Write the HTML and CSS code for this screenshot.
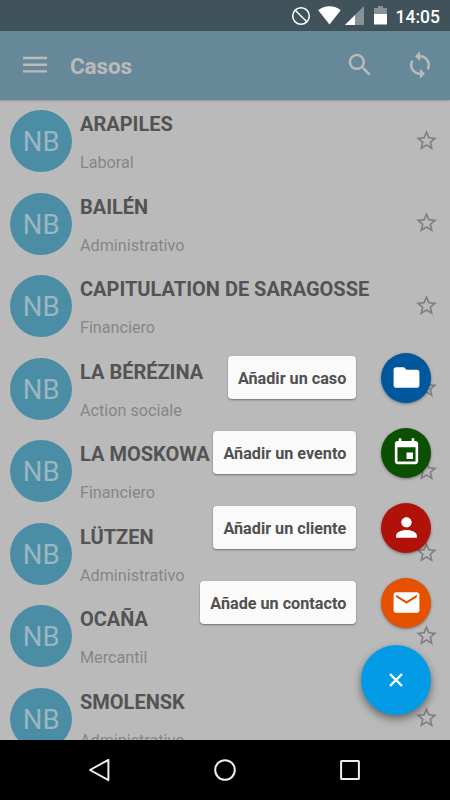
FILE: index.html
```html
<!DOCTYPE html>
<html lang="es">
<head>
    <meta charset="UTF-8">
    <meta name="viewport" content="width=device-width, initial-scale=1.0">
    <title>Casos</title>
    <link rel="stylesheet" href="styles.css">
</head>
<body>
    <svg class="sprite">
        <symbol id="star" viewBox="0 0 24 24">
            <path d="M22 9.24l-7.19-.62L12 2 9.19 8.63 2 9.24l5.46 4.73L5.82 21 12 17.27 18.18 21l-1.63-7.03L22 9.24zM12 15.4l-3.76 2.27 1-4.28-3.32-2.88 4.38-.38L12 6.1l1.71 4.04 4.38.38-3.32 2.88 1 4.28L12 15.4z"/>
        </symbol>
    </svg>

    <div class="screen">
        <div class="status-bar">
            <svg class="status-none" viewBox="0 0 20 20"><circle cx="10" cy="10" r="8.3"/><path d="M4.2 4.2l11.6 11.6"/></svg>
            <svg class="status-wifi" viewBox="0 0 23 19"><path d="M11.5 18.6L.3 4.2C3.5 1.7 7.2.3 11.5.3s8 1.4 11.2 3.9z"/></svg>
            <svg class="status-signal" viewBox="0 0 19 19"><path class="dim" d="M19 0v19H0z"/><path d="M10 9v10H0z"/></svg>
            <svg class="status-battery" viewBox="0 0 13 19"><path class="dim" d="M4 0h5v2h4v7H0V2h4z"/><path d="M0 8h13v10.5H0z"/></svg>
            <span class="clock">14:05</span>
        </div>

        <header class="toolbar">
            <svg class="icon menu" viewBox="0 0 24 18"><path d="M0 .8h24v2.4H0zM0 7.5h24v2.4H0zM0 14.2h24v2.4H0z"/></svg>
            <h1>Casos</h1>
            <svg class="icon search" viewBox="0 0 24 24"><path d="M15.5 14h-.79l-.28-.27C15.41 12.59 16 11.11 16 9.5 16 5.91 13.09 3 9.5 3S3 5.91 3 9.5 5.91 16 9.5 16c1.61 0 3.09-.59 4.23-1.57l.27.28v.79l5 4.99L20.49 19l-4.99-5zm-6 0C7.01 14 5 11.99 5 9.5S7.01 5 9.5 5 14 7.01 14 9.5 11.99 14 9.5 14z"/></svg>
            <svg class="icon" viewBox="0 0 24 24"><path d="M12 4V1L8 5l4 4V6c3.31 0 6 2.69 6 6 0 1.01-.25 1.97-.7 2.8l1.46 1.46C19.54 15.03 20 13.57 20 12c0-4.42-3.58-8-8-8zm0 14c-3.31 0-6-2.69-6-6 0-1.01.25-1.97.7-2.8L5.24 7.74C4.46 8.97 4 10.43 4 12c0 4.42 3.58 8 8 8v3l4-4-4-4v3z"/></svg>
        </header>

        <ul class="cases">
            <li class="case">
                <span class="avatar">NB</span>
                <div class="info"><h2>ARAPILES</h2><p>Laboral</p></div>
                <svg class="star"><use href="#star"/></svg>
            </li>
            <li class="case">
                <span class="avatar">NB</span>
                <div class="info"><h2>BAILÉN</h2><p>Administrativo</p></div>
                <svg class="star"><use href="#star"/></svg>
            </li>
            <li class="case">
                <span class="avatar">NB</span>
                <div class="info"><h2>CAPITULATION DE SARAGOSSE</h2><p>Financiero</p></div>
                <svg class="star"><use href="#star"/></svg>
            </li>
            <li class="case">
                <span class="avatar">NB</span>
                <div class="info"><h2>LA BÉRÉZINA</h2><p>Action sociale</p></div>
                <svg class="star"><use href="#star"/></svg>
            </li>
            <li class="case">
                <span class="avatar">NB</span>
                <div class="info"><h2>LA MOSKOWA</h2><p>Financiero</p></div>
                <svg class="star"><use href="#star"/></svg>
            </li>
            <li class="case">
                <span class="avatar">NB</span>
                <div class="info"><h2>LÜTZEN</h2><p>Administrativo</p></div>
                <svg class="star"><use href="#star"/></svg>
            </li>
            <li class="case">
                <span class="avatar">NB</span>
                <div class="info"><h2>OCAÑA</h2><p>Mercantil</p></div>
                <svg class="star"><use href="#star"/></svg>
            </li>
            <li class="case">
                <span class="avatar">NB</span>
                <div class="info"><h2>SMOLENSK</h2><p>Administrativo</p></div>
                <svg class="star"><use href="#star"/></svg>
            </li>
        </ul>

        <nav class="nav-bar">
            <svg viewBox="0 0 24 24"><path d="M20.4 1.8v20.4L2 12z"/></svg>
            <svg viewBox="0 0 24 24"><circle cx="12" cy="12" r="9.8"/></svg>
            <svg viewBox="0 0 24 24"><rect x="3.1" y="3.1" width="17.8" height="17.8" rx=".5"/></svg>
        </nav>

        <!-- floating menu, drawn over the list -->
        <div class="fab-menu">
            <div class="fab-item">
                <span class="fab-label">Añadir un caso</span>
                <button class="fab blue"><svg viewBox="0 0 24 24"><path d="M10 4H4c-1.1 0-1.99.9-1.99 2L2 18c0 1.1.9 2 2 2h16c1.1 0 2-.9 2-2V8c0-1.1-.9-2-2-2h-8l-2-2z"/></svg></button>
            </div>
            <div class="fab-item">
                <span class="fab-label">Añadir un evento</span>
                <button class="fab green"><svg viewBox="0 0 24 24"><path d="M17 12h-5v5h5v-5zM16 1v2H8V1H6v2H5c-1.11 0-1.99.9-1.99 2L3 19c0 1.1.89 2 2 2h14c1.1 0 2-.9 2-2V5c0-1.1-.9-2-2-2h-1V1h-2zm3 18H5V8h14v11z"/></svg></button>
            </div>
            <div class="fab-item">
                <span class="fab-label">Añadir un cliente</span>
                <button class="fab red"><svg viewBox="0 0 24 24"><path d="M12 12c2.21 0 4-1.79 4-4s-1.79-4-4-4-4 1.79-4 4 1.79 4 4 4zm0 2c-2.67 0-8 1.34-8 4v2h16v-2c0-2.66-5.33-4-8-4z"/></svg></button>
            </div>
            <div class="fab-item">
                <span class="fab-label">Añade un contacto</span>
                <button class="fab orange"><svg viewBox="0 0 24 24"><path d="M20 4H4c-1.1 0-1.99.9-1.99 2L2 18c0 1.1.9 2 2 2h16c1.1 0 2-.9 2-2V6c0-1.1-.9-2-2-2zm0 4l-8 5-8-5V6l8 5 8-5v2z"/></svg></button>
            </div>
            <button class="fab-main"><svg viewBox="0 0 14 14"><path d="M1 1l12 12M13 1L1 13"/></svg></button>
        </div>
    </div>
</body>
</html>
```
FILE: styles.css
```css
* {
    box-sizing: border-box;
}

body {
    margin: 0;
    font-family: Roboto, sans-serif;
    background-color: #000;
}

h1, h2, p, ul {
    margin: 0;
    padding: 0;
}

svg {
    display: block;
    flex: none;
}

.sprite {
    display: none;
}

.screen {
    position: relative;
    display: flex;
    flex-direction: column;
    width: 450px;
    height: 800px;
    overflow: hidden;
    background-color: #bababa;
}

.status-bar {
    display: flex;
    flex: none;
    align-items: center;
    justify-content: flex-end;
    height: 31px;
    padding-right: 10px;
    background-color: #40535b;
    color: #fff;
    fill: #fff;
}

.status-none {
    width: 20px;
    height: 20px;
    margin-right: 7px;
    fill: none;
    stroke: #fff;
    stroke-width: 1.5;
}

.status-wifi {
    width: 23px;
    height: 19px;
    margin-right: 4px;
}

.status-signal {
    width: 19px;
    height: 19px;
    margin-right: 10px;
}

.status-battery {
    width: 13px;
    height: 19px;
    margin-right: 9px;
}

.dim {
    fill: #869298;
}

.clock {
    padding-top: 2px;
    font-size: 17.5px;
    font-weight: 500;
    line-height: 20px;
}

.toolbar {
    display: flex;
    flex: none;
    align-items: center;
    height: 69px;
    padding: 0 15px 0 23px;
    background-color: #678898;
    box-shadow: 0 1px 2px rgba(0, 0, 0, 0.2);
    color: #bababa;
    z-index: 1;
}

.toolbar h1 {
    flex: 1;
    padding-top: 1px;
    font-size: 22.5px;
    font-weight: 700;
    letter-spacing: -0.1px;
}

.icon {
    width: 30px;
    height: 30px;
    margin-bottom: 1px;
    fill: #bababa;
}

.menu {
    width: 24px;
    height: 18px;
    margin-right: 23px;
}

.search {
    margin-right: 30px;
}

.cases {
    flex: 1;
    min-height: 0;
    overflow: hidden;
    list-style: none;
}

.case {
    display: flex;
    height: 82.5px;
    padding: 10px 11.5px 0 10px;
}

.avatar {
    flex: none;
    width: 62.4px;
    height: 62.4px;
    border-radius: 50%;
    background-color: #4b8da5;
    color: #9bb6c0;
    font-size: 27.5px;
    line-height: 64px;
    text-align: center;
}

.info {
    flex: 1;
    padding: 2px 0 0 7.6px;
}

.info h2 {
    color: #535353;
    font-size: 20px;
    font-weight: 700;
    line-height: 25px;
}

.info p {
    padding-top: 16px;
    color: #868686;
    font-size: 16.2px;
    line-height: 20px;
}

.star {
    width: 25px;
    height: 25px;
    margin-top: 17.5px;
    fill: #808080;
}

.nav-bar {
    display: flex;
    flex: none;
    align-items: center;
    justify-content: center;
    gap: 101px;
    height: 60px;
    background-color: #000;
}

.nav-bar svg {
    width: 24px;
    height: 24px;
    fill: none;
    stroke: #eee;
    stroke-width: 2;
    stroke-linejoin: round;
}

.fab-menu {
    position: absolute;
    right: 18.7px;
    bottom: 85px;
    display: flex;
    flex-direction: column;
    align-items: flex-end;
    gap: 25px;
}

.fab-item {
    display: flex;
    align-items: center;
    gap: 25px;
    height: 50px;
}

.fab-label {
    height: 42.5px;
    padding: 0 10px;
    border-radius: 4px;
    background-color: #fafafa;
    box-shadow: 0 1px 2px rgba(0, 0, 0, 0.4);
    color: #505050;
    font-size: 16.2px;
    font-weight: 700;
    line-height: 45px;
}

button {
    display: flex;
    align-items: center;
    justify-content: center;
    padding: 0;
    border: none;
    border-radius: 50%;
}

.fab {
    width: 50px;
    height: 50px;
    box-shadow: 0 1px 3px rgba(0, 0, 0, 0.4);
}

.fab svg {
    width: 31px;
    height: 31px;
    fill: #fff;
}

.blue {
    background-color: #01579b;
}

.green {
    background-color: #0b5000;
}

.red {
    background-color: #b0120a;
}

.orange {
    background-color: #e65100;
}

.fab-main {
    width: 70px;
    height: 70px;
    margin-top: -7.5px;
    background-color: #039be5;
    box-shadow: 0 4px 8px rgba(0, 0, 0, 0.45);
}

.fab-main svg {
    width: 14px;
    height: 14px;
    fill: none;
    stroke: #fff;
    stroke-width: 2.4;
}
```
